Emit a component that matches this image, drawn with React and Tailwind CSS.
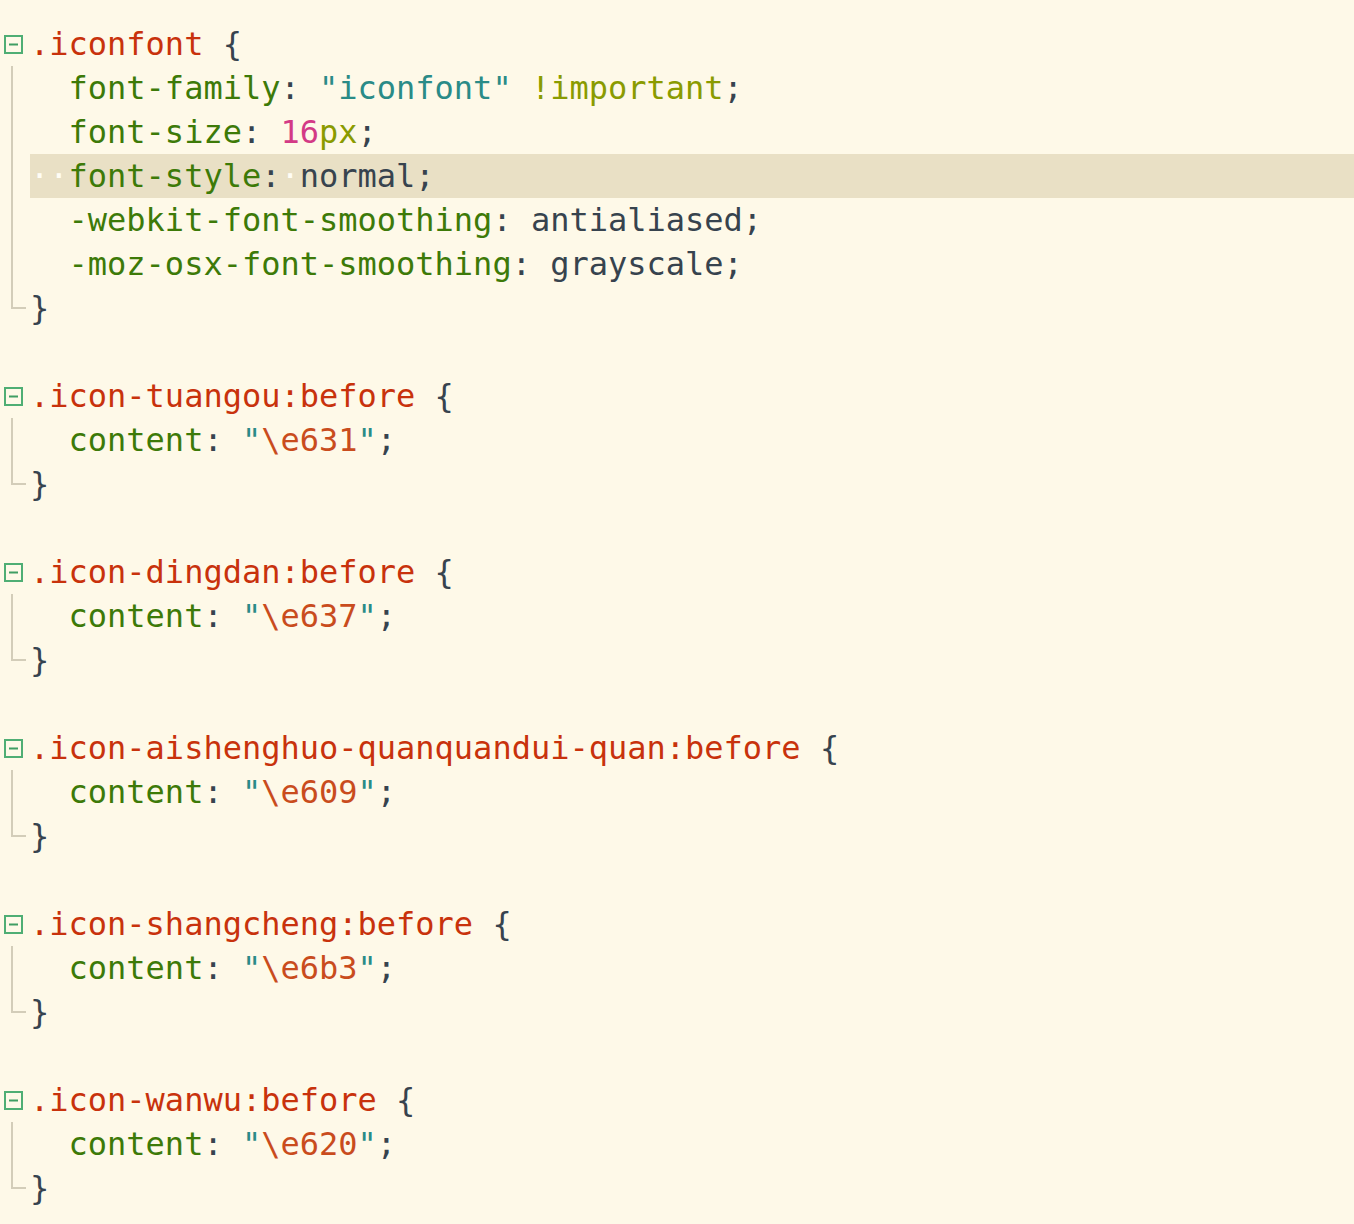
import React from "react";

const C = {
  sel: "text-[#c8320c]",
  prop: "text-[#3d7a08]",
  punc: "text-[#37434e]",
  str: "text-[#2a8b87]",
  kw: "text-[#8a9b00]",
  num: "text-[#d33a86]",
  esc: "text-[#c94c1d]",
};

function block(selector, props) {
  return [
    { fold: true, tokens: [[selector, C.sel], [" {", C.punc]] },
    ...props.map((p) => ({ guide: "mid", tokens: p })),
    { guide: "end", tokens: [["}", C.punc]] },
  ];
}

function contentLine(code) {
  return [
    ["  content", C.prop],
    [": ", C.punc],
    ['"', C.str],
    [code, C.esc],
    ['"', C.str],
    [";", C.punc],
  ];
}

const lines = [
  ...block(".iconfont", [
    [["  font-family", C.prop], [": ", C.punc], ['"iconfont"', C.str], [" ", C.punc], ["!important", C.kw], [";", C.punc]],
    [["  font-size", C.prop], [": ", C.punc], ["16", C.num], ["px", C.kw], [";", C.punc]],
    "current",
    [["  -webkit-font-smoothing", C.prop], [": ", C.punc], ["antialiased;", C.punc]],
    [["  -moz-osx-font-smoothing", C.prop], [": ", C.punc], ["grayscale;", C.punc]],
  ]),
  { tokens: [] },
  ...block(".icon-tuangou:before", [contentLine("\\e631")]),
  { tokens: [] },
  ...block(".icon-dingdan:before", [contentLine("\\e637")]),
  { tokens: [] },
  ...block(".icon-aishenghuo-quanquandui-quan:before", [contentLine("\\e609")]),
  { tokens: [] },
  ...block(".icon-shangcheng:before", [contentLine("\\e6b3")]),
  { tokens: [] },
  ...block(".icon-wanwu:before", [contentLine("\\e620")]),
];

function FoldBox() {
  return (
    <svg width="19" height="19" viewBox="0 0 19 19" className="ml-[4px]">
      <rect x="1" y="1" width="17" height="17" fill="none" stroke="#4fae74" strokeWidth="2" />
      <rect x="5" y="8.5" width="9" height="2" fill="#3f9e63" />
    </svg>
  );
}

function Dot() {
  return <span className="text-[#fffdf5]">·</span>;
}

function Gutter({ line }) {
  if (line.fold) {
    return (
      <div className="w-[30px] h-full flex items-center">
        <FoldBox />
      </div>
    );
  }
  if (line.guide === "mid") {
    return (
      <div className="w-[30px] h-full">
        <div className="ml-[11px] h-full border-l-2 border-[#d3cdb9]" />
      </div>
    );
  }
  if (line.guide === "end") {
    return (
      <div className="w-[30px] h-full">
        <div className="ml-[11px] w-[15px] h-[23px] border-l-2 border-b-2 border-[#d3cdb9]" />
      </div>
    );
  }
  return <div className="w-[30px] h-full" />;
}

export default function App() {
  return (
    <div
      className="w-[1354px] h-[1224px] bg-[#fef9e8] pt-[22px] overflow-hidden"
      style={{ fontFamily: '"DejaVu Sans Mono", "Liberation Mono", monospace' }}
    >
      {lines.map((line, i) => {
        const current = line.tokens === "current";
        return (
          <div key={i} className="flex h-[44px] items-stretch">
            <Gutter line={line} />
            <div
              className={`flex-1 flex items-center text-[32px] leading-[44px] whitespace-pre ${current ? "bg-[#e9e0c5]" : ""}`}
            >
              {current ? (
                <>
                  <Dot />
                  <Dot />
                  <span className={C.prop}>font-style</span>
                  <span className={C.punc}>:</span>
                  <Dot />
                  <span className={C.punc}>normal;</span>
                </>
              ) : (
                line.tokens.map(([t, c], j) => (
                  <span key={j} className={c}>
                    {t}
                  </span>
                ))
              )}
            </div>
          </div>
        );
      })}
    </div>
  );
}
